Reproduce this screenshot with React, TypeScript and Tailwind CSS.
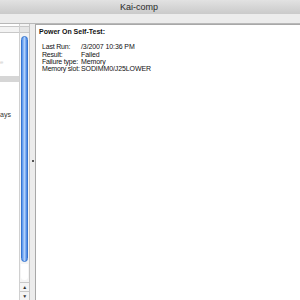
import React from "react";

const rows = [
  { label: "Last Run:", value: "/3/2007 10:36 PM" },
  { label: "Result:", value: "Failed" },
  { label: "Failure type:", value: "Memory" },
  { label: "Memory slot:", value: "SODIMM0/J25LOWER" },
];

export default function App() {
  return (
    <div className="flex h-[300px] w-[300px] flex-col overflow-hidden bg-[#e8e8e8] font-['Liberation_Sans',sans-serif]">
      {/* title bar */}
      <div className="flex h-[14px] items-center justify-center bg-gradient-to-b from-[#e2e2e2] to-[#cacaca] pr-[22px] text-[9px] leading-none text-[#2a2a2a]">
        Kai-comp
      </div>
      <div className="h-[10px] border-b border-[#b8b8b8] bg-[#ececec]" />

      <div className="flex flex-1">
        {/* source list */}
        <div className="flex w-[30px] border-r border-[#c4c4c4] bg-white">
          <div className="flex w-[20px] flex-col">
            <div className="mt-[2px] h-[7px] border-y border-[#c8c8c8] bg-[#f3f3f3]" />
            <div className="mt-[26px] h-[6px] text-[6px] leading-none text-[#d0d0d0]">e</div>
            <div className="mt-[11px] h-[6px] bg-[#d6d6d6]" />
            <div className="mt-[29px] text-[7px] leading-none text-[#333]">ays</div>
          </div>
          <div className="flex w-[10px] flex-col border-l border-[#d0d0d0] bg-[#f4f4f4]">
            <div className="mt-[2px] h-[7px] border-y border-[#c8c8c8] bg-[#e6e6e6]" />
            <div className="mx-auto mt-[3px] h-[226px] w-[7px] rounded-full border border-[#3575d0] bg-gradient-to-r from-[#4f90ec] via-[#b0d0fa] to-[#407fe0]" />
            <div className="mx-auto mt-[2px] h-[16px] w-[7px] rounded-b-full bg-white" />
            <div className="mt-auto flex h-[9px] items-center justify-center border-t border-[#c8c8c8] text-[5px] leading-none text-[#333]">▲</div>
            <div className="flex h-[9px] items-center justify-center border-t border-[#c8c8c8] text-[5px] leading-none text-[#333]">▼</div>
          </div>
        </div>

        {/* splitter */}
        <div className="flex w-[5px] items-start justify-center bg-[#ececec] pt-[136px]">
          <div className="h-[2px] w-[2px] bg-[#555]" />
        </div>

        {/* detail pane */}
        <div className="flex-1 border-l border-t border-[#a8a8a8] bg-white pl-[3px] pt-[3px] text-[7px] leading-none text-[#111]">
          <div className="whitespace-nowrap font-bold">Power On Self-Test:</div>
          <div className="mt-[8px] flex flex-col pl-[3px]">
            {rows.map((r) => (
              <div key={r.label} className="flex h-[7.4px] items-center whitespace-nowrap">
                <span className="w-[39px] shrink-0 tracking-[-0.2px]">{r.label}</span>
                <span className="tracking-[-0.1px]">{r.value}</span>
              </div>
            ))}
          </div>
        </div>
      </div>
    </div>
  );
}
